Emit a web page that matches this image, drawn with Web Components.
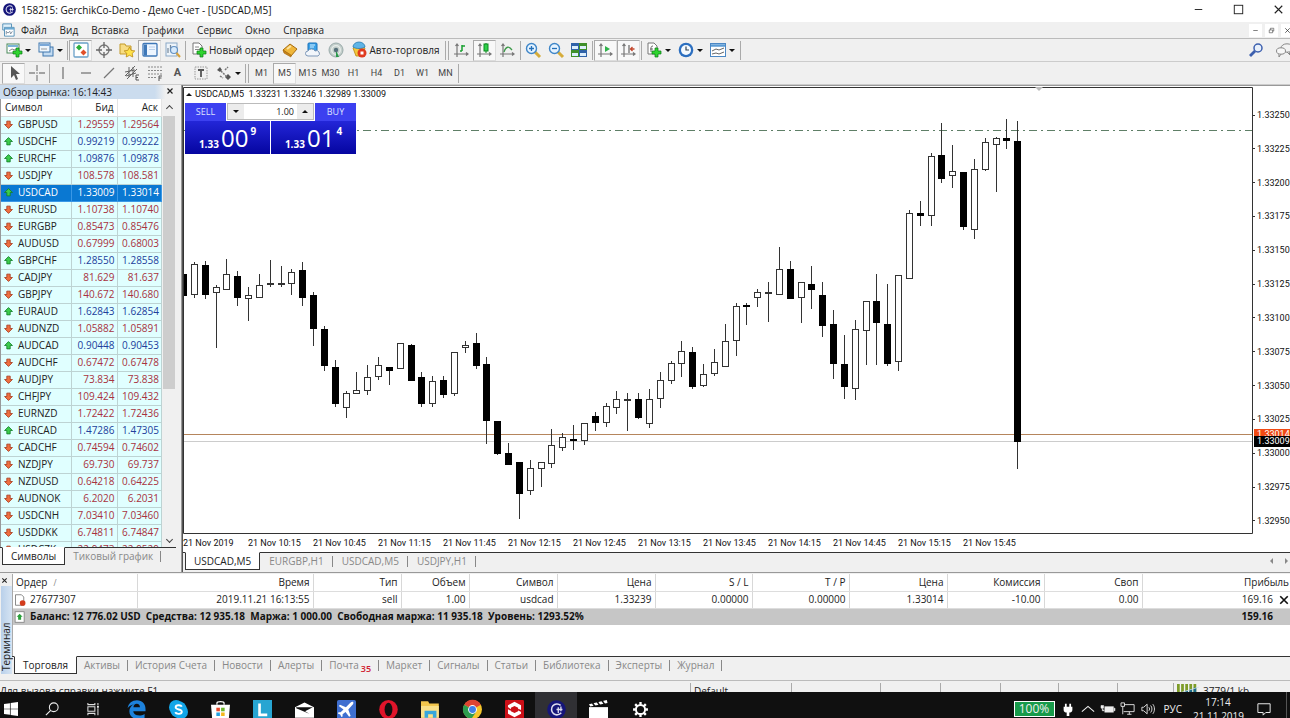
<!DOCTYPE html>
<html lang="ru">
<head>
<meta charset="utf-8">
<title>158215: GerchikCo-Demo - Демо Счет - [USDCAD,M5]</title>
<style>
  html, body { margin: 0; height: 100%; }
  body { overflow: hidden; background: #f0f0f0; color: #222; font: 10px/14px "Open Sans", "Noto Sans", sans-serif; --ui: #f0f0f0; --line: #a8a8a8; }
</style>
</head>
<body>
<trade-desktop></trade-desktop>
<script>
const arrowPath = 'M8 1l7 7h-4v6H5V8H1z';
const doc = (x, y) => `<path d="M${x} ${y}h6l3 3v8h-9z" fill="#fff" stroke="#777"/>`;
const plus = (x, y) => `<path d="M${x} ${y}h3v-3h3v3h3v3h-3v3h-3v-3h-3z" fill="#2fd42f" stroke="#0a7a14" stroke-width=".7"/>`;
const axes = '<path d="M4 2v13M1 12h14M2.500 4L4 2l1.500 2M13 10.500L15 12l-2 1.500" fill="none" stroke="#777" stroke-width="1.200"/>';
const ICONS = {
  gapp: '<circle cx="8" cy="8" r="7.800" fill="#15157a"/><path d="M11.500 4.500A4.600 4.600 0 1 0 12 10.800" fill="none" stroke="#dde" stroke-width="1.300"/><path d="M8 8h5M9.500 6v5M11.700 5.500v4" stroke="#dde" stroke-width="1.100" fill="none"/>',
  mdi: '<path d="M2 1h10v7H2z" fill="#dff0fa" stroke="#4a8ab4"/><path d="M4 5h11v10H4z" fill="#fff" stroke="#4a8ab4"/><path d="M4 6.500h11" stroke="#6aaad4" stroke-width="2"/><path d="M6 13V9.500l2 2 2-2 1 3 2-3" stroke="#789" fill="none"/>',
  addchart: '<rect x="1" y="2" width="12" height="9" fill="#fff" stroke="#4a8a5a"/><path d="M2 4h10" stroke="#7bb4d8" stroke-width="2"/><path d="M3 9l3-2 3 1 3-2" stroke="#888" fill="none"/>' + plus(7, 9),
  profiles: '<rect x="5" y="5" width="10" height="9" fill="#c4dcf2" stroke="#3f77ae"/><rect x="1" y="1" width="11" height="9" fill="#eef6fd" stroke="#3f77ae"/><path d="M1.500 3h10" stroke="#7aa8d8" stroke-width="2"/><path d="M3 7h6" stroke="#999"/>',
  market: '<rect x="1" y="1" width="14" height="14" rx="1" fill="#fff" stroke="#6aa0c8" stroke-width="1.300"/><path d="M6 2.500l3 3-3 3-3-3z" fill="#2cae3a"/><path d="M10.500 7.500l3 3-3 3-3-3z" fill="#e0502a"/>',
  target: '<circle cx="8" cy="8" r="5" fill="none" stroke="#777" stroke-width="1.300"/><path d="M8 0v6M8 10v6M0 8h6M10 8h6" stroke="#666" stroke-width="1.300"/>',
  favs: '<path d="M1 2h5l1 2h5v8H1z" fill="#f7dc83" stroke="#c39a2b"/><path d="M10.500 5l1.700 3.400 3.600.5-2.600 2.500.6 3.600-3.300-1.700L7.200 15l.6-3.600L5.200 8.900l3.600-.5z" fill="#ffe24a" stroke="#bb8a12" stroke-width=".8"/>',
  nav: '<rect x="1" y="1.500" width="14" height="12.500" rx="1" fill="#eef6ff" stroke="#3f78b8" stroke-width="1.300"/><rect x="2" y="2.500" width="3" height="11" fill="#3f78b8"/><path d="M7 5h6M7 7.500h6" stroke="#a9c5e4" stroke-width=".8"/>',
  tester: '<rect x="1" y="1" width="11" height="13" fill="#eef4fa" stroke="#8aa8c6"/><path d="M3 11V6M5.500 9V3M8 11V5" stroke="#789" stroke-width="1.200"/><circle cx="9" cy="8" r="3.500" fill="#d7eafc" stroke="#6390c2" stroke-width="1.200"/><path d="M11.500 11l3.500 4" stroke="#d6a13c" stroke-width="2"/>',
  neworder: doc(2, 1) + '<path d="M4 5h4M4 7.500h5" stroke="#888"/>' + plus(6, 9),
  editor: '<path d="M1 8l7-6 7 5-6 7z" fill="#efb63a" stroke="#a66b10"/><path d="M1 8l1 3 7 4v-2z" fill="#c88318" stroke="#a66b10" stroke-width=".7"/><path d="M5 7l4-3" stroke="#fbe3a0" stroke-width="2"/>',
  host: '<rect x="3" y="1" width="9" height="8" rx="1" fill="#3aa2e8" stroke="#1b70b8"/><path d="M5 3h5M5 5h4" stroke="#d8f0ff"/><path d="M3 14a2.500 2.500 0 0 1 0-5 4 4 0 0 1 7 0 2.500 2.500 0 0 1 3 5z" fill="#f2f6fb" stroke="#7c97b8"/>',
  signal: '<circle cx="8" cy="8" r="7" fill="#c4cfcb" stroke="#9aa"/><circle cx="8" cy="8" r="4.300" fill="none" stroke="#e8eeec" stroke-width="1.300"/><path d="M8 8v7h3z" fill="#2a9a4a"/><circle cx="8" cy="8" r="2.200" fill="#56707a"/>',
  auto: '<path d="M2 6c3-2 9-2 12 0l-3 8H5z" fill="#f3c83c" stroke="#b8860b" stroke-width=".8"/><path d="M2 5a6 5 0 0 1 12 0c-3 2-9 2-12 0z" fill="#5eb4e6" stroke="#2a7ab0" stroke-width=".8"/><circle cx="11" cy="11" r="4.500" fill="#e03a1e"/><rect x="9.500" y="9.500" width="3" height="3" fill="#fff"/>',
  bars: axes + '<path d="M9 9V3M7 9h2M9 4h3" stroke="#19a030" stroke-width="1.500"/>',
  candles: axes + '<path d="M10 1v10" stroke="#0d8a20"/><rect x="8" y="2" width="4" height="7" fill="#2ed04a" stroke="#0d8a20"/>',
  linechart: axes + '<path d="M5 10c2-6 5-6 8-2" fill="none" stroke="#3d9a4a" stroke-width="1.300"/>',
  zoomin: '<path d="M10 10l5 5" stroke="#d6ac3a" stroke-width="3"/><circle cx="6.500" cy="6.500" r="5" fill="#e5f3ff" stroke="#3f86c8" stroke-width="1.400"/><path d="M4 6.500h5M6.500 4v5" stroke="#2470b8" stroke-width="1.300"/>',
  zoomout: '<path d="M10 10l5 5" stroke="#d6ac3a" stroke-width="3"/><circle cx="6.500" cy="6.500" r="5" fill="#e5f3ff" stroke="#3f86c8" stroke-width="1.400"/><path d="M4 6.500h5" stroke="#2470b8" stroke-width="1.300"/>',
  tile: '<path d="M0 1h8v7H0zM8 8h8v7H8z" fill="#2f62a8"/><path d="M8 1h8v7H8zM0 8h8v7H0z" fill="#3f8f2a"/><path d="M1 4h6v3H1zM9 4h6v3H9zM1 11h6v3H1zM9 11h6v3H9z" fill="#dceefc"/>',
  autoscroll: axes + '<path d="M8 4l5 3-5 3z" fill="#2fb24a"/>',
  shift: axes + '<path d="M9 3v8" stroke="#666" stroke-width="1.200"/><path d="M14.500 7h-4M12.500 5l-2 2 2 2" stroke="#c2452a" fill="none" stroke-width="1.300"/>',
  indic: doc(2, 1) + '<path d="M7 4c-2 0-2 1-2 3v3M4 7h3" stroke="#666" fill="none"/>' + plus(6, 9),
  clock: '<circle cx="8" cy="8" r="7.300" fill="#2c6fc0"/><circle cx="8" cy="8" r="5" fill="#f4faff"/><path d="M8 4.500V8h3" stroke="#345" fill="none" stroke-width="1.200"/>',
  template: '<rect x="0.500" y="1.500" width="15" height="13" fill="#fff" stroke="#4b87c4"/><path d="M1 3.500h14" stroke="#5b9bd5" stroke-width="2.500"/><path d="M2 9l4-2 3 1 5-2M2 12l4-1 3 1 5-2" stroke="#666" fill="none"/>',
  search: '<circle cx="10" cy="6" r="4" fill="#e8f0fb" stroke="#3c5fae" stroke-width="1.500"/><path d="M7 9l-5 5" stroke="#3c5fae" stroke-width="2.800"/>',
  chat: '<ellipse cx="11" cy="6" rx="6" ry="4.200" fill="#f2f2f2" stroke="#888"/><ellipse cx="5" cy="9" rx="4.500" ry="3.200" fill="#f7f7f7" stroke="#888"/><path d="M3 12v3l2-3M13 10l1 3-3-3" fill="#eee" stroke="#888"/>',
  cursor: '<path d="M5 1v12l3-3 2 5 2-1-2-5h4z" fill="#555"/>',
  cross: '<path d="M8 0v6M8 10v6M0 8h6M10 8h6" stroke="#888" stroke-width="1.300"/><path d="M8 7v2" stroke="#888"/>',
  vline: '<path d="M8 2v12" stroke="#777" stroke-width="1.300"/>',
  hline: '<path d="M3 8h10" stroke="#777" stroke-width="1.300"/>',
  trend: '<path d="M3 13L13 3" stroke="#777" stroke-width="1.300"/>',
  channel: '<path d="M1 11L11 1M3 14L13 4M1 7l10-2M2 11l10-3M5 2v10M9 2v10" stroke="#666"/><path d="M15 10h-3v5h3M12 12.500h2" stroke="#555" fill="none"/>',
  fibo: '<path d="M1 2h14M1 5.500h14M1 9h14M1 12.500h9" stroke="#888" stroke-dasharray="2 1"/><path d="M15 11h-3v5M12 13h2.500" stroke="#555" fill="none"/>',
  label: '<rect x="2" y="2" width="12" height="12" fill="none" stroke="#999" stroke-dasharray="1.500 1"/><path d="M5 5h6M8 5v7" stroke="#555" stroke-width="1.800"/>',
  shapes: '<path d="M1 5l3-3 2 3-2 2zM9 12l3-3 3 3-3 3z" fill="#555"/><path d="M5 6l6 6M9 5l3-3M4 11l3 2" stroke="#777" stroke-width="1.500" stroke-dasharray="2 1"/>',
  up: `<path d="${arrowPath}" fill="#3ccc4c" stroke="#13802a" stroke-width="1.500"/>`,
  down: `<path d="${arrowPath}" transform="rotate(180 8 8)" fill="#f07040" stroke="#a8391c" stroke-width="1.500"/>`,
  ordersheet: '<path d="M2 1h8l3 3v11H2z" fill="#fff" stroke="#666"/><circle cx="11.500" cy="12" r="3.800" fill="#d43c1c"/>',
  balance: '<rect x="1.500" y="1" width="12" height="14" fill="#fff" stroke="#777"/><path d="M7.500 3.500l4 4h-2v4h-4v-4h-2z" fill="#2aa03a"/>',
  win: '<path d="M0 2.300L6.800 1.300v6.300H0zM7.600 1.200L16 0v7.600H7.600zM0 8.400h6.800v6.300L0 13.700zM7.600 8.400H16V16l-8.400-1.200z" fill="#fff"/>',
  lens: '<circle cx="10" cy="6" r="5" fill="none" stroke="#eee" stroke-width="1.200"/><path d="M6.500 9.500L1 15" stroke="#eee" stroke-width="1.300"/>',
  tasks: '<path d="M1 1v2h8V1M1 15v-2h8v2M1 5.500h8v5H1zM12.500 1v3M12.500 7v8" fill="none" stroke="#ddd" stroke-width="1.200"/><path d="M11.500 4.500h2v2h-2z" fill="#fff"/>',
  edge: '<path d="M.500 7C1.200 2.800 4.400.300 8.300.300c4.600 0 7.300 3.200 7.300 7.200v2H5.300c.2 2.400 2.300 3.500 4.900 3.500 1.700 0 3.300-.5 4.600-1.300v3.200c-1.500.8-3.300 1.200-5.200 1.200-4.600 0-7.600-2.600-7.600-6.600 0-2.600 1.400-4.700 3.800-5.900C3.600 4.300 1.600 5.200.500 7zm4.900-.8h5.500c0-1.900-1-3-2.700-3S5.600 4.400 5.400 6.200z" fill="#1d82dc"/>',
  skype: '<circle cx="6" cy="6" r="6" fill="#13a6e8"/><circle cx="10" cy="10" r="6" fill="#13a6e8"/><circle cx="8" cy="8" r="7" fill="#13a6e8"/><path d="M10.800 5.600C10 4 5.600 4 5.600 6.200c0 2.400 5.200 1.200 5.200 3.700 0 2.300-4.600 2.300-5.600.4" fill="none" stroke="#fff" stroke-width="1.600"/>',
  store: '<path d="M5 4V2.500C5 1 11 1 11 2.500V4" stroke="#fff" fill="none"/><path d="M0 4h16l-1 12H1z" fill="#fff"/><path d="M4.500 6.500h3v3h-3z" fill="#e8482c"/><path d="M8.500 6.500h3v3h-3z" fill="#6cb52a"/><path d="M4.500 10.500h3v3h-3z" fill="#22a0e0"/><path d="M8.500 10.500h3v3h-3z" fill="#f5b81c"/>',
  lbox: '<rect width="16" height="16" fill="#27a5d2"/><path d="M5.500 3v9.500H12" stroke="#fff" stroke-width="2.200" fill="none"/>',
  mail: '<path d="M0 6l8-4 8 4v9H0z" fill="#fff"/><path d="M1 6h14L8.500 9.500 12 11.500 1 7z" fill="#101010"/>',
  plane: '<rect width="16" height="16" rx="1.500" fill="#3f6fd0"/><path d="M2.500 4l5 2 3.500-3.500c1-1 2.500-1.200 2.700-.7.300.5 0 1.700-1 2.700L9.500 8l2 5.500-1.300.7-3-4L4.700 12v1.800l-1 .5-1-2-2-1 .6-1h1.700L5.500 8 1.500 5z" fill="#fff"/>',
  opera: '<ellipse cx="8" cy="8" rx="7.800" ry="8" fill="#e0142a"/><ellipse cx="8" cy="8" rx="3.300" ry="5.600" fill="#101010"/>',
  folder: '<path d="M0 1h6l1 2h8v12H0z" fill="#f3c64d"/><path d="M0 5h15v10H0z" fill="#fbe18a"/><path d="M3 15V9h10v6h-3v-3H6v3z" fill="#37a6dc"/>',
  chrome: '<circle cx="8" cy="8" r="8" fill="#f4c62c"/><path d="M8 8L1 4a8 8 0 0 1 14 0z" fill="#de4433"/><path d="M8 8L1 4a8 8 0 0 0 6 12l4-6z" fill="#2d9c4f"/><circle cx="8" cy="8" r="3.700" fill="#fff"/><circle cx="8" cy="8" r="2.900" fill="#3f7fe8"/>',
  hex: '<rect width="16" height="16" rx="1" fill="#cc1018"/><path d="M8 1.500l5.500 3v7l-5.500 3-5.500-3v-7z" fill="#fff"/><path d="M8 5l3 1.500v3L8 11 5 9.500v-3z" fill="#cc1018"/><path d="M2 6.500l3 2M11 8l3 1.500" stroke="#cc1018" stroke-width="1.400"/>',
  clap: '<path d="M0 6h16v10H0z" fill="#fff"/><path d="M0 3.500L15 0l.6 2.500L1 5.500z" fill="#fff"/><path d="M3 2.500l2 3M7 1.500l2 3M11 .5l2 3" stroke="#101010" stroke-width="1.300"/>',
  gear: '<circle cx="8" cy="8" r="4.300" fill="none" stroke="#fff" stroke-width="1.800"/><path d="M8 1v2.500M8 12.500V15M1 8h2.500M12.500 8H15M3 3l2 2M11 11l2 2M3 13l2-2M11 5l2-2" stroke="#fff" stroke-width="2.200"/>',
  plug: '<path d="M5.500 2v4M10.500 2v4" stroke="#fff" stroke-width="2"/><path d="M3 5.500h10V9c0 2-2 3-3.500 3v4h-3v-4C5 12 3 11 3 9z" fill="#fff"/>',
  chevup: '<path d="M1 11l7-6 7 6" fill="none" stroke="#eee" stroke-width="1.300"/>',
  batt: '<rect x="4" y="5" width="10.500" height="7" fill="#eee"/><path d="M15 7h1v3h-1zM0 4h3v3H0zM1.500 7v3H4" fill="#eee" stroke="#eee" stroke-width=".6"/>',
  screen: '<path d="M3 3h12v8H3M7 14h5M9.500 11v3" fill="none" stroke="#eee"/><path d="M0 1h4v4H0zM2 5v9" fill="#101010" stroke="#eee"/>',
  sound: '<path d="M1 6v4h2l4 3.500v-11L3 6z" fill="none" stroke="#eee"/><path d="M9 6c1 1 1 3 0 4M11 4c2 2 2 6 0 8M13.500 2.500c2.500 3 2.500 8 0 11" fill="none" stroke="#eee"/>',
  note: '<path d="M1 2h14v10h-5l-3 3v-3H1z" fill="none" stroke="#eee" stroke-width="1.100"/>',
  minus: '<path d="M4 8h8" stroke="#222"/>',
  max: '<rect x="3.500" y="3.500" width="9" height="9" fill="none" stroke="#222"/>',
  close: '<path d="M4 4l8 8M12 4l-8 8" stroke="#222" stroke-width="1.200"/>',
  xbold: '<path d="M3 3l10 10M13 3L3 13" stroke="#222" stroke-width="2.400"/>',
  bclose: '<path d="M2 2l12 12M14 2L2 14" stroke="#111" stroke-width="2.600"/>',
  restore: '<path d="M4 7h6v5H4zM6 7V4h6v5h-2" fill="none" stroke="#555" stroke-width="1.200"/>',
  traffic: '<path d="M1 0v16M4 0v16M7 0v16M10 0v16M13 0v16" stroke="#7d9c28" stroke-width="2"/><path d="M7 9v7M10 7v9M13 5v11" stroke="#1a6a8a" stroke-width="2"/><path d="M0 13L16 4" stroke="#cde" stroke-width="1"/>'
};

/* Registers an element whose shadow root is cloned from a template. */
function component(name, css, html) {
  const tpl = document.createElement('template');
  customElements.define(name, class extends HTMLElement {
    connectedCallback() {
      if (this.shadowRoot) return;
      const root = this.attachShadow({ mode: 'open' });
      tpl.innerHTML = `<style>*{box-sizing:border-box}button,input{font:inherit;color:inherit;margin:0;padding:0;border:0;background:none;border-radius:0}${css}</style>` + (typeof html === 'function' ? html(this) : html);
      root.append(tpl.content.cloneNode(true));
    }
  });
}

component('ui-icon', ':host{display:inline-block;flex:none;width:16px;height:16px}svg{display:block;width:100%;height:100%;overflow:visible}',
  el => `<svg viewBox="0 0 16 16" preserveAspectRatio="${el.hasAttribute('fill') ? 'none' : 'xMidYMid'}" aria-hidden="true">${ICONS[el.getAttribute('name')]}</svg>`);

component('title-bar', `
  :host{display:flex;height:22px;background:#fff;align-items:center;padding:0 0 3px 3px}
  ui-icon{width:13px;height:13px} .t{flex:1;padding-left:5px;color:#111;white-space:nowrap}
  button{width:40px;height:16px;display:grid;place-items:center} button:last-child{width:28px} button:last-child{width:36px;padding-left:4px} button ui-icon{width:15px;height:15px}
  .w{display:flex;margin-right:-4px}`,
  `<ui-icon name="gapp"></ui-icon><span class="t"><slot></slot></span>
   <div class="w"><button aria-label="Свернуть"><ui-icon name="minus"></ui-icon></button><button aria-label="Развернуть"><ui-icon name="max"></ui-icon></button><button aria-label="Закрыть"><ui-icon name="close"></ui-icon></button></div>`);

component('menu-bar', `
  :host{display:flex;height:17px;align-items:center;background:var(--ui);border-bottom:1px solid #bbb}
  ui-icon{width:14px;height:14px;margin-left:1px} nav{display:flex;flex:1;gap:13px;padding-left:6px}
  .w{display:flex;gap:3px;margin-right:-4px} .w button{width:13px;height:13px;background:#fff;display:grid;place-items:center} .w ui-icon{width:9px;height:9px;margin:0}`,
  `<ui-icon name="mdi"></ui-icon><nav>${['Файл', 'Вид', 'Вставка', 'Графики', 'Сервис', 'Окно', 'Справка'].map(t => `<button>${t}</button>`).join('')}</nav>
   <div class="w"><button aria-label="Свернуть окно"><ui-icon name="minus"></ui-icon></button><button aria-label="Восстановить окно"><ui-icon name="restore"></ui-icon></button><button aria-label="Закрыть окно"><ui-icon name="close"></ui-icon></button></div>`);

component('tool-button', `
  :host{display:flex;width:23px;flex:none} :host([menu]){width:32px} :host([wide]){width:auto}
  button{flex:1;height:21px;display:flex;align-items:center;justify-content:center;gap:2px;white-space:nowrap}
  :host([wide]) button{padding:0 4px}
  :host([pressed]) button{background:#f8f8f8;border:1px solid #aaa;border-right-color:#ddd;border-bottom-color:#ddd}
  :host([menu]) button::after{content:"";border:3px solid transparent;border-top-color:#111;border-bottom:0;margin-left:1px}
  ui-icon{width:16px;height:16px}`,
  el => `<button aria-label="${el.getAttribute('label') || el.textContent}" aria-pressed="${el.hasAttribute('pressed')}">${el.hasAttribute('icon') ? `<ui-icon name="${el.getAttribute('icon')}"></ui-icon>` : ''}<slot></slot></button>`);
component('tool-sep', ':host{display:block;flex:none;width:1px;height:19px;background:#aaa;margin:0 1px}:host([double]){width:4px;background:none;border:solid #aaa;border-width:0 1px}', '');
component('tool-row', ':host{display:flex;height:23px;align-items:center;background:var(--ui);padding-left:2px;border-bottom:1px solid #ccc}', '<slot></slot>');

const tb = (icon, label, extra = '') => `<tool-button icon="${icon}" label="${label}" ${extra}></tool-button>`;
component('tool-bars', `:host{display:block;background:var(--ui)} .right{margin-left:auto;display:flex;gap:5px;margin-right:-5px} .small{font-size:9px;font-family:Roboto,sans-serif;color:#444} .a{font-weight:700;font-size:11px;color:#555}`, `
  <tool-row>${tb('addchart', 'Новый график', 'menu')}${tb('profiles', 'Профили', 'menu')}<tool-sep></tool-sep>
  ${tb('market', 'Обзор рынка', 'pressed')}${tb('target', 'Окно данных')}${tb('favs', 'Навигатор')}${tb('nav', 'Терминал', 'pressed')}${tb('tester', 'Тестер')}<tool-sep></tool-sep>
  <tool-button icon="neworder" wide>Новый ордер</tool-button>${tb('editor', 'Редактор')}${tb('host', 'Хостинг')}${tb('signal', 'Сигналы')}<tool-button icon="auto" wide>Авто-торговля</tool-button><tool-sep double></tool-sep>
  ${tb('bars', 'Бары')}${tb('candles', 'Свечи', 'pressed')}${tb('linechart', 'Линия')}<tool-sep></tool-sep>${tb('zoomin', 'Увеличить')}${tb('zoomout', 'Уменьшить')}${tb('tile', 'Окна')}<tool-sep></tool-sep>
  ${tb('autoscroll', 'Автопрокрутка', 'pressed')}${tb('shift', 'Сдвиг', 'pressed')}<tool-sep></tool-sep>${tb('indic', 'Индикаторы', 'menu')}${tb('clock', 'Периоды', 'menu')}${tb('template', 'Шаблоны', 'menu')}<tool-sep></tool-sep>
  <div class="right">${tb('search', 'Поиск')}${tb('chat', 'Сообщество')}</div></tool-row>
  <tool-row>${tb('cursor', 'Курсор', 'pressed')}${tb('cross', 'Перекрестие')}<tool-sep></tool-sep>${tb('vline', 'Вертикальная линия')}${tb('hline', 'Горизонтальная линия')}${tb('trend', 'Трендовая линия')}${tb('channel', 'Канал')}${tb('fibo', 'Фибоначчи')}<tool-button class="small a">A</tool-button>${tb('label', 'Метка')}${tb('shapes', 'Стрелки', 'menu')}<tool-sep double></tool-sep>
  ${['M1', 'M5', 'M15', 'M30', 'H1', 'H4', 'D1', 'W1', 'MN'].map(t => `<tool-button class="small" ${t === 'M5' ? 'pressed' : ''}>${t}</tool-button>`).join('')}<tool-sep></tool-sep></tool-row>`);

const QUOTES = `GBPUSD 1.29559 1.29564 d
USDCHF 0.99219 0.99222 u
EURCHF 1.09876 1.09878 u
USDJPY 108.578 108.581 d
USDCAD 1.33009 1.33014 u
EURUSD 1.10738 1.10740 d
EURGBP 0.85473 0.85476 d
AUDUSD 0.67999 0.68003 d
GBPCHF 1.28550 1.28558 u
CADJPY 81.629 81.637 d
GBPJPY 140.672 140.680 d
EURAUD 1.62843 1.62854 u
AUDNZD 1.05882 1.05891 d
AUDCAD 0.90448 0.90453 u
AUDCHF 0.67472 0.67478 d
AUDJPY 73.834 73.838 d
CHFJPY 109.424 109.432 d
EURNZD 1.72422 1.72436 d
EURCAD 1.47286 1.47305 u
CADCHF 0.74594 0.74602 d
NZDJPY 69.730 69.737 d
NZDUSD 0.64218 0.64225 d
AUDNOK 6.2020 6.2031 d
USDCNH 7.03410 7.03460 d
USDDKK 6.74811 6.74847 d
USDCZK 22.9473 22.9529 d`.split('\n').map(r => r.split(' '));

component('tab-strip', `
  :host{display:flex;align-items:flex-start;border-top:1px solid #333;background:var(--ui);color:#888;height:17px;padding-left:2px}
  button{height:16px;padding:var(--tab-pad,0 8px);white-space:nowrap;position:relative}
  button:not(.on)::after{content:"";position:absolute;right:0;top:3px;height:11px;border-right:1px solid #888}
  .on{padding:0 8px;background:#fff;color:#222;border:1px solid #333;border-top-color:#fff;margin-top:-1px;height:18px}
  sub{color:#d02030;font-weight:600;font-size:9px;line-height:0;vertical-align:-3px;padding-left:2px}`,
  el => el.getAttribute('tabs').split('|').map((t, i) => `<button role="tab" aria-selected="${!i}" class="${i ? '' : 'on'}">${t.replace(/#(\d+)/, '<sub>$1</sub>')}</button>`).join(''));

component('market-watch', `
  :host{display:flex;flex-direction:column;width:182px;flex:none;background:var(--ui);padding-right:5px;border-right:1px solid #999;min-height:0}
  header{height:14px;display:flex;align-items:center;justify-content:space-between;background:linear-gradient(90deg,#cbdcee 0 88%,#f0f0f0 94%);padding:0 0 0 3px}
  header button{width:10px;height:10px;display:grid} header ui-icon{width:8px;height:8px}
  .body{flex:1;min-height:0;display:flex;overflow:hidden;border-left:1px solid #999}
  .list{flex:1;overflow:hidden;background:#e0ffff}
  table{width:100%;border-collapse:collapse;table-layout:fixed}
  th{font-weight:400;height:17px;padding:0 3px;text-align:right;background:#fff;border-right:1px solid #e4e4e4;border-bottom:1px solid #ddd}
  th:first-child{text-align:left;padding-left:4px}
  td{height:17px;padding:0 2px 0 0;text-align:right;border-right:1px solid #bdd3d3;border-bottom:1px solid #bdd3d3;color:#a83240;line-height:15px}
  .u td{color:#22409c} td:first-child{text-align:left;color:#222;white-space:nowrap}
  td ui-icon{width:9px;height:9px;margin:0 5px 0 3px;vertical-align:-1px}
  tr.sel td,tr.sel td:first-child{background:#0a78d2;color:#fff;border-color:#3a98e6}
  .bar{width:14px;background:var(--ui);display:flex;flex-direction:column;align-items:center}
  .thumb{width:12px;height:273px;background:#cdcdcd} .bar i{width:5px;height:5px;border:solid #444;border-width:1px 0 0 1px;transform:rotate(45deg);margin:7px 0 5px} .bar i:last-child{transform:rotate(225deg);margin:auto 0 5px}
  tab-strip{flex:none;margin-bottom:8px}`,
  `<header><span>Обзор рынка: 16:14:43</span><button aria-label="Закрыть обзор рынка"><ui-icon name="xbold"></ui-icon></button></header>
   <div class="body"><div class="list"><table><colgroup><col style="width:70px"><col style="width:46px"><col></colgroup><thead><tr><th>Символ</th><th>Бид</th><th>Аск</th></tr></thead><tbody>
   ${QUOTES.map(([s, b, a, d]) => `<tr class="${d} ${s === 'USDCAD' ? 'sel' : ''}"><td><ui-icon name="${d === 'u' ? 'up' : 'down'}"></ui-icon>${s}</td><td>${b}</td><td>${a}</td></tr>`).join('')}
   </tbody></table></div><div class="bar"><i></i><div class="thumb"></div><i></i></div></div><tab-strip tabs="Символы|Тиковый график"></tab-strip>`);

/* Each bar: b = falling / w = rising, high, body top, body bottom, low. */
const BARS = `b273,274,295,303 w262,264,294,297 b261,265,294,298 w285,287,292,347 w259,274,289,289 b271,276,297,305 w287,295,298,320 w274,285,297,297 w260,283,284,286 w266,283,284,286 w269,272,283,294 b262,270,297,305 b292,295,328,345 b326,329,365,370 b360,367,403,406 w391,393,407,417 w372,390,393,393 w365,377,390,394 w357,365,376,379 b367,367,370,384 w343,343,368,368 b344,345,380,380 b372,377,403,406 w376,381,403,406 b376,380,394,397 w352,352,393,395 w341,345,347,352 b333,343,365,368 b357,364,420,443 b421,421,453,454 b443,453,464,464 b462,462,493,518 w460,468,490,494 w462,462,468,486 w429,445,463,467 w433,437,447,450 b425,439,440,449 w423,423,440,444 b412,416,422,430 w403,406,422,426 w391,399,407,413 w393,399,400,430 b393,399,417,418 w389,399,423,427 w372,380,398,407 w361,363,380,383 w341,351,363,376 b347,352,386,388 w364,374,385,386 w349,362,373,375 w324,341,366,366 w303,306,340,355 b303,305,306,324 w289,292,297,306 w282,292,293,321 w247,269,294,294 b261,269,298,298 w282,282,297,322 b266,284,289,308 b282,295,325,336 b310,324,363,378 b335,364,386,398 w320,329,388,399 w301,301,330,364 b274,301,322,364 b284,324,363,365 w275,275,361,370 w210,213,278,278 b201,213,215,225 w153,156,215,225 b123,155,178,182 w145,171,175,187 b172,172,226,229 w159,169,229,238 w138,142,169,170 w137,138,144,191 b119,138,140,148 b121,141,441,468`.split(' ');
const candles = BARS.map((s, i) => {
  const [hi, top, bot, lo] = s.slice(1).split(',').map(Number);
  const x = 183 + Math.round(i * 10.835);
  return `<path d="M${x + .5} ${hi}V${lo + 1}" stroke="#333"/>` + (s[0] === 'b'
    ? `<rect x="${x - 3}" y="${top}" width="7" height="${Math.max(2, bot - top + 1)}"/>`
    : `<rect x="${x - 2.5}" y="${top + .5}" width="6" height="${bot - top}" fill="#fff" stroke="#333"/>`);
}).join('');

component('one-click', `
  :host{display:grid;grid-template-columns:1fr 1fr;grid-template-rows:18px 33px;width:171px;column-gap:1px;color:#fff;font-family:"Open Sans",sans-serif}
  .top{grid-column:1/3;display:flex;background:#fff}
  .top>button{flex:none;width:41px;background:#3c40f0;height:18px;color:#dfe2ff}
  .q{flex:1;min-width:0;display:flex;margin:0 1px;border:1px solid #bbb;height:17px;background:#fff;color:#222}
  .q button{flex:none;width:16px;background:#ececec;display:grid;place-items:center} input{flex:1;width:0;min-width:0;text-align:right;padding-right:3px}
  .q i{border:3px solid transparent;border-top-color:#111;border-bottom:0} .q i.n{border-top:0;border-bottom:3px solid #111}
  .p{background:linear-gradient(#2326d8,#0505a0);display:flex;align-items:flex-end;justify-content:center;gap:2px;padding-bottom:4px}
  b{font-size:10px;line-height:12px} .l{font-size:24px;line-height:24px} sup{font-size:10px;line-height:10px;font-weight:700;align-self:flex-start;padding-top:5px}`,
  `<div class="top"><button>SELL</button><div class="q"><button aria-label="Уменьшить объем"><i></i></button><input aria-label="Объем" value="1.00"><button aria-label="Увеличить объем"><i class="n"></i></button></div><button>BUY</button></div>
   <button class="p"><b>1.33</b><span class="l">00</span><sup>9</sup></button><button class="p"><b>1.33</b><span class="l">01</span><sup>4</sup></button>`);

component('price-chart', `
  :host{display:flex;flex-direction:column;flex:1;min-width:0;border-left:1px solid #555;border-top:1px solid #999;background:#fff;padding-top:1px;--tab-pad:0 9px}
  .g{flex:1;min-height:0;display:grid;grid-template-columns:minmax(0,1fr) 37px;grid-template-rows:minmax(0,1fr) 18px;font:9px/12px Roboto,"Open Sans",sans-serif;color:#111}
  .plot{position:relative;min-height:0} svg{display:block;width:100%;height:100%}
  .cap{position:absolute;left:3px;top:1px;white-space:pre;display:flex;align-items:center;gap:3px} .cap i{border:3px solid transparent;border-bottom-color:#111;border-top:0}
  one-click{position:absolute;left:2px;top:16px}
  .mark{position:absolute;left:80%;top:0;border:4px solid transparent;border-top-color:#bbb;border-bottom:0;margin-left:-4px}
  .y{position:relative;display:flex;flex-direction:column;justify-content:space-between;padding:22px 0 7px;overflow:hidden}
  .y span{display:flex;align-items:center;gap:2px} .y span::before{content:"";width:2px;height:1px;background:#333}
  .y b{position:absolute;left:1px;right:0;padding-left:3px;font-weight:400;color:#fff;height:11px;line-height:11px}
  .x{display:flex;grid-column:1/3;overflow:hidden;padding-top:3px} .x span{width:65px;flex:none;white-space:nowrap}
  footer{display:flex;height:20px;background:var(--ui);flex:none} tab-strip{flex:1}
  .arr{border-top:1px solid #333;display:flex;gap:12px;padding:5px 2px;height:20px} .arr i{border:3px solid transparent;border-right-color:#888;border-left:0;height:0} .arr i+i{border-right:0;border-left:3px solid #888}`,
  `<div class="g"><div class="plot"><svg viewBox="183 87 1070 447" preserveAspectRatio="none" role="img" aria-label="USDCAD M5">
   <path d="M183 130.500H1252" stroke="#5f7f67" stroke-dasharray="8 4 2 4"/><path d="M183 441.500H1252" stroke="#ccc"/><path d="M183 434.500H1252" stroke="#b5855c"/>${candles}<path d="M183.500 87.500H1252.500V533.500H183.500z" fill="none" stroke="#333"/></svg>
   <div class="cap"><i></i><span>USDCAD,M5  1.33231 1.33246 1.32989 1.33009</span></div><one-click></one-click><div class="mark"></div></div>
   <div class="y">${Array.from({ length: 13 }, (_, i) => `<span>${(1.3325 - i * .00025).toFixed(5)}</span>`).join('')}<b style="top:342px;background:#f04a14">1.33014</b><b style="top:349px;background:#000">1.33009</b></div>
   <div class="x">${['2019', '10:15', '10:45', '11:15', '11:45', '12:15', '12:45', '13:15', '13:45', '14:15', '14:45', '15:15', '15:45'].map(t => `<span>21 Nov ${t}</span>`).join('')}</div></div>
   <footer><tab-strip tabs="USDCAD,M5|EURGBP,H1|USDCAD,M5|USDJPY,H1"></tab-strip><div class="arr"><i></i><i></i></div></footer>`);

const COLS = [['Ордер', 124, ''], ['Время', 176, '2019.11.21 16:13:55'], ['Тип', 88, 'sell'], ['Объем', 68, '1.00'], ['Символ', 88, 'usdcad'], ['Цена', 98, '1.33239'], ['S / L', 97, '0.00000'], ['T / P', 97, '0.00000'], ['Цена', 98, '1.33014'], ['Комиссия', 97, '-10.00'], ['Своп', 98, '0.00']];
component('trade-terminal', `
  :host{display:flex;height:108px;background:var(--ui);border-top:1px solid #999;padding-top:1px;flex:none;--tab-pad:0 8px 0 7px}
  aside{width:12px;display:flex;flex-direction:column;align-items:center;flex:none;padding-bottom:6px}
  aside button{height:12px;margin-left:-4px} aside ui-icon{width:7px;height:7px;display:block}
  aside span{flex:1;width:11px;background:linear-gradient(90deg,#d6e4f3,#b9d0ea);writing-mode:vertical-rl;transform:rotate(180deg);line-height:11px;padding-top:3px}
  main{flex:1;min-width:0;display:flex;flex-direction:column;padding-bottom:7px}
  .v{flex:1;background:#fff;overflow:hidden;border-left:1px solid #aaa}
  table{width:100%;border-collapse:collapse;table-layout:fixed}
  th,td{height:17px;padding:0 3px;text-align:right;font-weight:400;border-right:1px solid #d8d8d8;border-bottom:1px solid #ddd;white-space:nowrap;line-height:15px}
  th:first-child,td:first-child{text-align:left} th:last-child{padding-right:1px} th:last-child,td:last-child{border-right:0}
  td:first-child{padding-left:1px} td ui-icon{width:12px;height:12px;vertical-align:-3px;margin-right:4px}
  th small{color:#888;padding-left:6px} .pr{display:flex;justify-content:flex-end;align-items:center;gap:6px} td .pr ui-icon{margin:0;display:block;width:10px;height:10px}
  .sum td{background:#c6c6c6;border:0;font-weight:700;color:#111} .sum td:last-child{padding-right:17px} td.pc{padding-right:1px}`,
  `<aside><button aria-label="Закрыть терминал"><ui-icon name="xbold"></ui-icon></button><span>Терминал</span></aside>
   <main><div class="v"><table><colgroup>${COLS.map(c => `<col style="width:${c[1]}px">`).join('')}<col></colgroup>
   <thead><tr>${COLS.map((c, i) => `<th>${c[0]}${i ? '' : '<small>/</small>'}</th>`).join('')}<th>Прибыль</th></tr></thead>
   <tbody><tr>${COLS.map((c, i) => `<td>${i ? c[2] : '<ui-icon name="ordersheet"></ui-icon>27677307'}</td>`).join('')}<td class="pc"><div class="pr">169.16<button aria-label="Закрыть ордер"><ui-icon name="bclose"></ui-icon></button></div></td></tr>
   <tr class="sum"><td colspan="11"><ui-icon name="balance"></ui-icon>Баланс: 12 776.02 USD&nbsp; Средства: 12 935.18&nbsp; Маржа: 1 000.00&nbsp; Свободная маржа: 11 935.18&nbsp; Уровень: 1293.52%</td><td>159.16</td></tr></tbody></table></div>
   <tab-strip tabs="Торговля|Активы|История Счета|Новости|Алерты|Почта#35|Маркет|Сигналы|Статьи|Библиотека|Эксперты|Журнал"></tab-strip></main>`);

component('status-bar', `
  :host{display:flex;height:12px;overflow:hidden;background:var(--ui);border-top:1px solid #bbb;flex:none;align-items:flex-start;padding-top:2px}
  span{border-left:1px solid #aaa;height:20px;padding:1px 3px;flex:none;display:flex;gap:4px} span:first-of-type{border:0;flex:1;padding-left:0} ui-icon{width:22px;height:12px}`,
  `<span>Для вызова справки нажмите F1</span><span style="width:101px">Default</span><span style="width:89px"></span><span style="width:60px"></span><span style="width:60px"></span><span style="width:58px"></span><span style="width:59px"></span><span style="width:56px"></span><span style="width:117px"><ui-icon name="traffic" fill></ui-icon>3779/1 kb</span>`);

component('task-bar', `
  :host{display:block;height:26px;overflow:hidden;background:#101010;color:#eee;flex:none}
  .r{display:flex;height:34px;align-items:center} .a button{width:42px;height:34px;display:grid;place-items:center} .a{display:flex;flex:1}
  .a ui-icon{width:19px;height:19px} .a button:nth-child(1){width:31px;justify-items:start;padding-left:4px} .a button:nth-child(2) ui-icon,.a button:nth-child(3) ui-icon,.a button:nth-child(1) ui-icon{width:14px;height:14px}
  .a button:last-child ui-icon{width:17px;height:17px}
  .a .on{background:#303034} .t{display:flex;align-items:center;gap:6px} .t button{display:grid} .t ui-icon{width:14px;height:14px}
  .pct{background:#189a4a;border:1px solid #fff;height:16px;line-height:14px;width:41px;text-align:center;font-size:12px}
  .lang{margin-left:3px} .c{display:block;text-align:center;width:50px;height:28px;line-height:14px;margin:0 0 0 5px} .t .n{margin:0 9px 0 8px} .e{border-left:1px solid #555;height:34px;width:4px}`,
  `<div class="r"><div class="a">${[['win', 'Пуск'], ['lens', 'Поиск'], ['tasks', 'Представление задач'], ['edge', 'Edge'], ['skype', 'Skype'], ['store', 'Магазин'], ['lbox', 'Словарь'], ['mail', 'Почта'], ['plane', 'Авиабилеты'], ['opera', 'Opera'], ['folder', 'Проводник'], ['chrome', 'Chrome'], ['hex', 'Приложение'], ['gapp', 'GerchikCo', 'on'], ['clap', 'Видео'], ['gear', 'Параметры']].map(([n, l, c]) => `<button aria-label="${l}" class="${c || ''}"><ui-icon name="${n}"></ui-icon></button>`).join('')}</div>
   <div class="t"><span class="pct">100%</span><ui-icon name="plug"></ui-icon><button aria-label="Скрытые значки"><ui-icon name="chevup"></ui-icon></button><ui-icon name="batt"></ui-icon><ui-icon name="screen"></ui-icon><ui-icon name="sound"></ui-icon><button class="lang">РУС</button><span class="c">17:14<br>21.11.2019</span><button class="n" aria-label="Уведомления"><ui-icon name="note"></ui-icon></button><span class="e"></span></div></div>`);

component('trade-desktop', `:host{display:flex;flex-direction:column;height:100vh;overflow:hidden} .m{flex:1;min-height:0;display:flex}`,
  `<title-bar>158215: GerchikCo-Demo - Демо Счет - [USDCAD,M5]</title-bar><menu-bar></menu-bar><tool-bars></tool-bars><div class="m"><market-watch></market-watch><price-chart></price-chart></div><trade-terminal></trade-terminal><status-bar></status-bar><task-bar></task-bar>`);
</script>
</body>
</html>
